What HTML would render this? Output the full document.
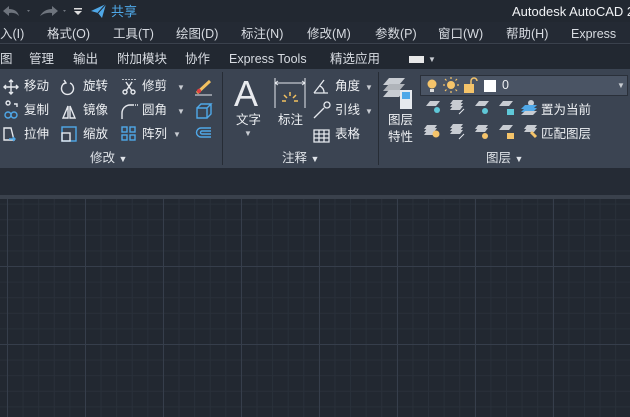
<!DOCTYPE html><html><head><meta charset="utf-8"><style>
*{margin:0;padding:0;box-sizing:border-box}
body{width:630px;height:417px;overflow:hidden;background:#212630;font-family:"Liberation Sans","Noto Sans CJK SC",sans-serif;color:#e6e9ee;position:relative;font-size:13px}
.a{position:absolute;white-space:nowrap;line-height:1}
#title{position:absolute;left:0;top:0;width:630px;height:22px;background:#222831}
#menu{position:absolute;left:0;top:22px;width:630px;height:22px;background:#242a34;border-bottom:1px solid #3a414c}
#tabs{position:absolute;left:0;top:45px;width:630px;height:24px;background:#222831}
#rib{position:absolute;left:0;top:69px;width:630px;height:99px;background:#3b4452}
#band{position:absolute;left:0;top:168px;width:630px;height:27px;background:#252b35}
#band2{position:absolute;left:0;top:195px;width:630px;height:4px;background:#3a414c}
#cv{position:absolute;left:0;top:199px;width:630px;height:218px;background-color:#222831;
background-image:linear-gradient(90deg,#363e4b 1px,transparent 1px),linear-gradient(0deg,#363e4b 1px,transparent 1px),linear-gradient(90deg,#29303a 1px,transparent 1px),linear-gradient(0deg,#29303a 1px,transparent 1px);
background-size:78px 78px,78px 78px,15.6px 15.6px,15.6px 15.6px;background-position:7px 68px,7px 68px,7px 68px,7px 68px}
.m{color:#d8dce2;font-size:12.5px}
.r{font-size:12.5px;color:#eef0f3}
.dd{font-size:8px;color:#c8ccd2}
.sep{position:absolute;top:72px;width:1px;height:93px;background:#262c35}
.ic{position:absolute}
</style></head><body>
<div id="title"></div><div id="menu"></div><div id="tabs"></div><div id="rib"></div><div id="band"></div><div id="band2"></div><div id="cv"></div>

<svg class="ic" style="left:2px;top:4px" width="90" height="16"><path d="M1 7 L7 2 L7 5 Q15 5 17 12 Q13 8 7 9 L7 12 Z" fill="#6e747d"/><path d="M25 6 l3 0 l-1.5 2z" fill="#6e747d"/><path d="M56 7 L50 2 L50 5 Q42 5 38 12 Q44 8 50 9 L50 12 Z" fill="#6e747d"/><path d="M61 6 l3 0 l-1.5 2z" fill="#6e747d"/><rect x="72" y="4" width="8" height="1.5" fill="#ddd"/><path d="M72 7 h8 l-4 4z" fill="#ddd"/></svg>
<svg class="ic" style="left:90px;top:3px" width="18" height="16"><path d="M1 8 L16 1 L12 15 L8 10 Z" fill="#4fa8e8"/><path d="M8 10 L16 1" stroke="#222831" stroke-width="1"/></svg>
<div class="a" style="left:111px;top:5px;color:#4fa8e8">共享</div>
<div class="a" style="left:512px;top:5px;font-size:13px;color:#f0f2f5">Autodesk AutoCAD 2</div>

<div class="a m" style="left:0;top:28px">入(I)</div>
<div class="a m" style="left:47px;top:28px">格式(O)</div>
<div class="a m" style="left:113px;top:28px">工具(T)</div>
<div class="a m" style="left:176px;top:28px">绘图(D)</div>
<div class="a m" style="left:241px;top:28px">标注(N)</div>
<div class="a m" style="left:307px;top:28px">修改(M)</div>
<div class="a m" style="left:375px;top:28px">参数(P)</div>
<div class="a m" style="left:438px;top:28px">窗口(W)</div>
<div class="a m" style="left:506px;top:28px">帮助(H)</div>
<div class="a m" style="left:571px;top:28px">Express</div>

<div class="a m" style="left:0;top:53px">图</div>
<div class="a m" style="left:29px;top:53px">管理</div>
<div class="a m" style="left:73px;top:53px">输出</div>
<div class="a m" style="left:117px;top:53px">附加模块</div>
<div class="a m" style="left:185px;top:53px">协作</div>
<div class="a m" style="left:229px;top:53px">Express Tools</div>
<div class="a m" style="left:330px;top:53px">精选应用</div>
<div class="ic" style="left:409px;top:56px;width:15px;height:7px;background:#e8e8e8"></div>
<div class="a dd" style="left:428px;top:56px">▼</div>

<div class="sep" style="left:222px"></div><div class="sep" style="left:378px"></div>

<!-- modify -->
<svg class="ic" style="left:3px;top:79px" width="215" height="66" fill="none" stroke="#e6e9ee" stroke-width="1.4">
<path d="M8 1v14M1 8h14M6 3l2-2 2 2M6 13l2 2 2-2M3 6l-2 2 2 2M13 6l2 2-2 2"/>
<path d="M62 4a6 6 0 1 0 5 0" /><path d="M61 1l2 3-3 1"/>
<path d="M119 0h14" stroke-dasharray="2 1"/><path d="M123 3l6 9M129 3l-6 9"/><circle cx="122" cy="13" r="2"/><circle cx="130" cy="13" r="2"/>
<path d="M5 26a2 2 0 1 1 0.1 0M11 25h3v3" /><circle cx="5" cy="36" r="3" stroke="#4fa8e8"/><circle cx="11" cy="36" r="3" stroke="#4fa8e8"/>
<path d="M60 39l5-12v12zM67 27l5 12h-5z"/>
<path d="M119 40v-6a8 8 0 0 1 8-8h4" /><path d="M132 26h3" stroke-dasharray="1 1"/>
<path d="M1 49h7l3 12h-10z"/><path d="M6 60h6M10 58l2 2-2 2" stroke="#4fa8e8"/>
<rect x="59" y="48" width="14" height="14" stroke="#4fa8e8"/><rect x="59" y="54" width="8" height="8"/>
<g stroke="#4fa8e8"><rect x="119" y="48" width="5" height="5"/><rect x="127" y="48" width="5" height="5"/><rect x="119" y="56" width="5" height="5"/><rect x="127" y="56" width="5" height="5"/></g>
<path d="M194 14l13-12" stroke="#f2c160" stroke-width="3"/><circle cx="196" cy="12" r="2.2" fill="#e04040" stroke="none"/><path d="M192 16h17" stroke-width="1"/>
<path d="M194 29h10v10h-10zM194 29l4-4h10l-4 4M208 25v10l-4 4" stroke="#4fa8e8"/>
<path d="M208 49h-10a4 4 0 0 0 0 9h10M208 52h-9a1.5 1.5 0 0 0 0 3h9" stroke="#4fa8e8"/>
</svg>
<div class="a r" style="left:24px;top:80px">移动</div>
<div class="a r" style="left:24px;top:104px">复制</div>
<div class="a r" style="left:24px;top:128px">拉伸</div>
<div class="a r" style="left:83px;top:80px">旋转</div>
<div class="a r" style="left:83px;top:104px">镜像</div>
<div class="a r" style="left:83px;top:128px">缩放</div>
<div class="a r" style="left:142px;top:80px">修剪</div>
<div class="a r" style="left:142px;top:104px">圆角</div>
<div class="a r" style="left:142px;top:128px">阵列</div>
<div class="a dd" style="left:177px;top:84px">▼</div>
<div class="a dd" style="left:177px;top:108px">▼</div>
<div class="a dd" style="left:173px;top:131px">▼</div>
<div class="a r" style="left:90px;top:152px;color:#dfe3e8">修改 <span style="font-size:9px">▼</span></div>

<!-- annotate -->
<div class="a" style="left:234px;top:76px;font-size:36px;color:#e8eaee">A</div>
<div class="a r" style="left:236px;top:114px">文字</div>
<div class="a dd" style="left:244px;top:130px">▼</div>
<svg class="ic" style="left:274px;top:78px" width="32" height="32" fill="none" stroke="#e6e9ee" stroke-width="1"><path d="M1 0v30M31 0v30M1 5h30M1 5l3-2M1 5l3 2M31 5l-3-2M31 5l-3 2"/><g stroke="#f2c160" stroke-width="1.5"><path d="M16 14v4M10 17l3 3M22 17l-3 3M8 23h4M20 23h4"/></g></svg>
<div class="a r" style="left:278px;top:114px">标注</div>
<svg class="ic" style="left:312px;top:78px" width="20" height="66" fill="none" stroke="#e6e9ee" stroke-width="1.3"><path d="M2 15h14M2 15l10-13M8 8a7 7 0 0 1 4 7"/><path d="M2 40l10-10" /><circle cx="15" cy="27" r="3"/><path d="M2 52h15v12h-15zM2 56h15M2 60h15M7 52v12M12 52v12"/></svg>
<div class="a r" style="left:335px;top:80px">角度</div>
<div class="a r" style="left:335px;top:104px">引线</div>
<div class="a r" style="left:335px;top:128px">表格</div>
<div class="a dd" style="left:365px;top:84px">▼</div>
<div class="a dd" style="left:365px;top:108px">▼</div>
<div class="a r" style="left:282px;top:152px;color:#dfe3e8">注释 <span style="font-size:9px">▼</span></div>

<!-- layers -->
<svg class="ic" style="left:383px;top:77px" width="30" height="32"><g fill="#c8ccd2"><path d="M0 8l6-7h16l-6 7z"/><path d="M0 14l6-7h16l-6 7z" fill="#b0b4ba"/><path d="M0 20l6-7h16l-6 7z"/></g><rect x="17" y="13" width="12" height="19" fill="#e6e9ee"/><rect x="19" y="15" width="8" height="7" fill="#4fa8e8"/></svg>
<div class="a r" style="left:388px;top:114px">图层</div>
<div class="a r" style="left:388px;top:131px">特性</div>
<div class="ic" style="left:420px;top:75px;width:208px;height:21px;background:#4a5464;border:1px solid #2a303a"></div>
<svg class="ic" style="left:424px;top:77px" width="80" height="18"><circle cx="8" cy="7" r="4.5" fill="#f5c46a"/><rect x="6" y="12" width="4" height="3" fill="#ddd"/><circle cx="27" cy="8" r="4" fill="#f5c46a"/><g stroke="#f5c46a" stroke-width="1.2"><path d="M27 0v2M27 14v2M19 8h2M33 8h2M21 2l1.5 1.5M33 2l-1.5 1.5M21 14l1.5-1.5M33 14l-1.5-1.5"/></g><rect x="40" y="7" width="10" height="9" fill="#f5c46a"/><path d="M47 7v-3a3 3 0 0 1 6 0" stroke="#f5c46a" stroke-width="1.5" fill="none"/><rect x="60" y="3" width="12" height="12" fill="#fff"/></svg>
<div class="a r" style="left:502px;top:79px">0</div>
<div class="a dd" style="left:617px;top:82px">▼</div>
<svg class="ic" style="left:423px;top:100px" width="115" height="44">
<g fill="#c8ccd2"><path d="M3 6l4-5h10l-4 5z"/><path d="M27 4l3-4h10l-3 4zM27 7l3-4h10l-3 4zM27 10l3-4h10l-3 4z"/><path d="M52 6l4-5h10l-4 5z"/><path d="M76 6l4-5h10l-4 5z"/>
<path d="M1 29l3-4h10l-3 4zM1 32l3-4h10l-3 4zM1 35l3-4h10l-3 4z"/><path d="M27 28l3-4h10l-3 4zM27 31l3-4h10l-3 4zM27 34l3-4h10l-3 4z"/><path d="M52 29l3-4h10l-3 4zM52 32l3-4h10l-3 4z"/><path d="M76 30l4-5h10l-4 5z"/><path d="M101 29l3-4h10l-3 4zM101 32l3-4h10l-3 4z"/></g>
<circle cx="14" cy="10" r="3" fill="#5fc8d8"/><path d="M41 9l-5 5" stroke="#e6e9ee"/><circle cx="62" cy="11" r="3" fill="#5fc8d8"/><rect x="84" y="9" width="7" height="6" fill="#5fc8d8"/>
<circle cx="13" cy="34" r="3.5" fill="#f5c46a"/><path d="M36 39l5-5" stroke="#e6e9ee"/><circle cx="62" cy="36" r="3" fill="#f5c46a"/><rect x="84" y="33" width="7" height="6" fill="#f5c46a"/><path d="M108 32l5 5" stroke="#f5c46a" stroke-width="3"/>
<circle cx="108" cy="3" r="3" fill="#c8ccd2"/><path d="M98 9l4-4h12l-4 4zM98 12l4-4h12l-4 4z" fill="#4fa8e8"/><path d="M98 15l4-4h12l-4 4z" fill="#c8ccd2"/>
</svg>
<div class="a r" style="left:541px;top:104px">置为当前</div>
<div class="a r" style="left:541px;top:128px">匹配图层</div>
<div class="a r" style="left:486px;top:152px;color:#dfe3e8">图层 <span style="font-size:9px">▼</span></div>
</body></html>
